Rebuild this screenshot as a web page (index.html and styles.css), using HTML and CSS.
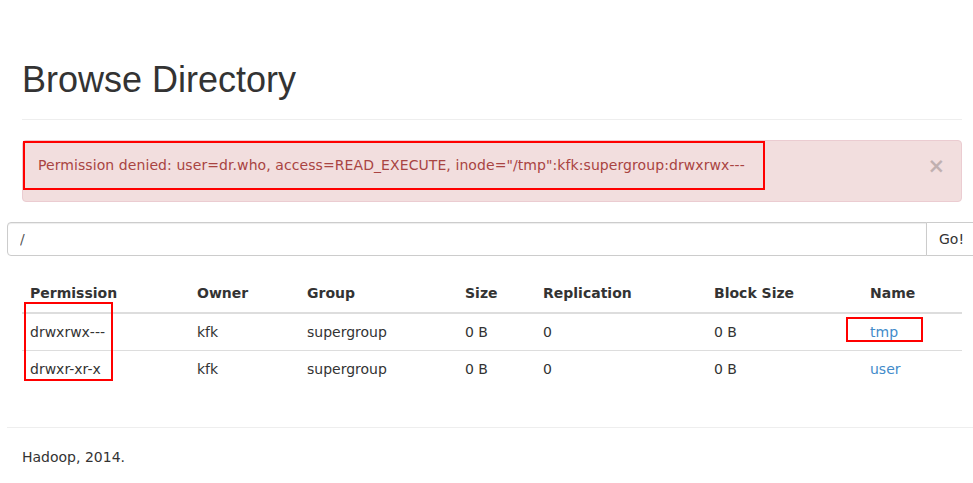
FILE: index.html
```html
<!DOCTYPE html>
<html>
<head>
<meta charset="utf-8">
<title>Browsing HDFS</title>
<link rel="stylesheet" href="styles.css">
</head>
<body>
<div class="container">
  <div class="page-header">
    <h1>Browse Directory</h1>
  </div>

  <div class="alert">
    <p class="alert-text">Permission denied: user=dr.who, access=READ_EXECUTE, inode="/tmp":kfk:supergroup:drwxrwx---</p>
    <span class="close">×</span>
    <span class="mark mark-alert"></span>
  </div>

  <div class="input-group">
    <input class="form-control" type="text" value="/">
    <button class="btn" type="button">Go!</button>
  </div>

  <div class="table-wrap">
    <table class="table">
      <thead>
        <tr>
          <th class="c-perm">Permission</th>
          <th class="c-owner">Owner</th>
          <th class="c-group">Group</th>
          <th class="c-size">Size</th>
          <th class="c-repl">Replication</th>
          <th class="c-block">Block Size</th>
          <th class="c-name">Name</th>
        </tr>
      </thead>
      <tbody>
        <tr>
          <td>drwxrwx---</td>
          <td>kfk</td>
          <td>supergroup</td>
          <td>0 B</td>
          <td>0</td>
          <td>0 B</td>
          <td><a href="#">tmp</a></td>
        </tr>
        <tr>
          <td>drwxr-xr-x</td>
          <td>kfk</td>
          <td>supergroup</td>
          <td>0 B</td>
          <td>0</td>
          <td>0 B</td>
          <td><a href="#">user</a></td>
        </tr>
      </tbody>
    </table>
    <span class="mark mark-perm"></span>
    <span class="mark mark-tmp"></span>
  </div>

  <hr class="footer-rule">
  <p class="footer">Hadoop, 2014.</p>
</div>
</body>
</html>
```

FILE: styles.css
```css
html, body {
  margin: 0;
  padding: 0;
  overflow: hidden;
  background: #fff;
}

body {
  font-family: "DejaVu Sans", sans-serif;
  font-size: 14px;
  line-height: 20px;
  color: #333;
}

.container {
  width: 940px;
  margin-left: 7px;
  padding: 0 15px;
}

.page-header {
  padding: 60px 0 9px;
  margin: 0 0 20px;
  border-bottom: 1px solid #eee;
}

.page-header h1 {
  margin: 0 0 10px;
  font-family: "Liberation Sans", Arial, sans-serif;
  font-size: 36px;
  font-weight: 500;
  line-height: 39.6px;
  color: #333;
}

.alert {
  position: relative;
  display: flex;
  align-items: flex-start;
  padding: 14px 16px 16px 15px;
  margin-bottom: 20px;
  background: #f2dede;
  border: 1px solid #ebccd1;
  border-radius: 4px;
  color: #a94442;
}

.alert-text {
  flex: 1;
  margin: 0 0 10px;
  letter-spacing: 0.08px;
}

.close {
  font-size: 21px;
  font-weight: bold;
  line-height: 21px;
  color: #000;
  opacity: 0.2;
  margin-top: 1px;
}

.mark {
  position: absolute;
  box-sizing: border-box;
  border: 2px solid #f00;
  pointer-events: none;
}

.mark-alert {
  left: 0;
  top: 0;
  width: 742px;
  height: 49px;
}

.input-group {
  display: flex;
  width: 970px;
  margin: 0 -15px 20px;
  height: 34px;
}

.form-control {
  flex: 1;
  box-sizing: border-box;
  height: 34px;
  margin: 0;
  padding: 6px 12px;
  font-family: "DejaVu Sans", sans-serif;
  font-size: 14px;
  color: #555;
  background: #fff;
  border: 1px solid #ccc;
  border-radius: 4px 0 0 4px;
  box-shadow: inset 0 1px 1px rgba(0,0,0,0.075);
  outline: none;
}

.btn {
  box-sizing: border-box;
  height: 34px;
  margin: 0 0 0 -1px;
  padding: 6px 12px;
  font-family: "DejaVu Sans", sans-serif;
  font-size: 14px;
  color: #333;
  background: #fff;
  border: 1px solid #ccc;
  border-radius: 0 4px 4px 0;
}

.table-wrap {
  position: relative;
  margin-bottom: 40px;
}

.table {
  width: 940px;
  border-collapse: collapse;
  border-spacing: 0;
  table-layout: fixed;
}

.table th,
.table td {
  padding: 8px;
  line-height: 20px;
  text-align: left;
  vertical-align: top;
  white-space: nowrap;
}

.table th {
  padding-top: 7px;
  padding-bottom: 9px;
  font-weight: bold;
  border-bottom: 2px solid #ddd;
}

.table td {
  border-top: 1px solid #ddd;
}

.c-perm { width: 151px; }
.c-owner { width: 94px; }
.c-group { width: 142px; }
.c-size { width: 62px; }
.c-repl { width: 155px; }
.c-block { width: 140px; }
.c-name { width: 84px; }

.table a {
  color: #428bca;
  text-decoration: none;
}

.mark-perm {
  left: 2px;
  top: 26px;
  width: 89px;
  height: 79px;
}

.mark-tmp {
  left: 824px;
  top: 41px;
  width: 77px;
  height: 25px;
}

.footer-rule {
  width: 970px;
  margin: 20px -15px 19px;
  border: 0;
  border-top: 1px solid #eee;
}

.footer {
  margin: 0;
}
```
